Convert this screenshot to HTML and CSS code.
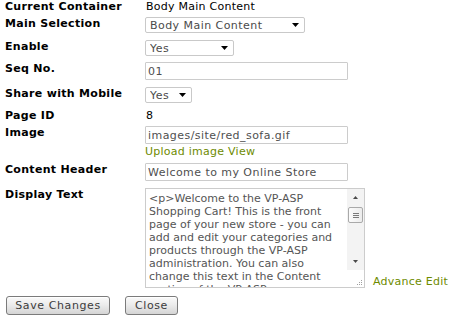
FILE: index.html
```html
<!DOCTYPE html>
<html>
<head>
<meta charset="utf-8">
<link rel="stylesheet" href="styles.css">
</head>
<body>
<div class="form">
  <div class="row text r1">
    <div class="label">Current Container</div>
    <div class="value">Body Main Content</div>
  </div>
  <div class="row">
    <div class="label">Main Selection</div>
    <div class="field">
      <span class="sel w-main"><select><option>Body Main Content</option></select><svg class="arrow" width="7" height="4" viewBox="0 0 7 4"><path d="M0 0H7L3.5 4Z"/></svg></span>
    </div>
  </div>
  <div class="row r3">
    <div class="label">Enable</div>
    <div class="field">
      <span class="sel w-enable"><select><option>Yes</option><option>No</option></select><svg class="arrow" width="7" height="4" viewBox="0 0 7 4"><path d="M0 0H7L3.5 4Z"/></svg></span>
    </div>
  </div>
  <div class="row">
    <div class="label">Seq No.</div>
    <div class="field"><input class="txt" type="text" value="01"></div>
  </div>
  <div class="row r5">
    <div class="label">Share with Mobile</div>
    <div class="field">
      <span class="sel w-share"><select><option>Yes</option><option>No</option></select><svg class="arrow" width="7" height="4" viewBox="0 0 7 4"><path d="M0 0H7L3.5 4Z"/></svg></span>
    </div>
  </div>
  <div class="row text r6">
    <div class="label">Page ID</div>
    <div class="value">8</div>
  </div>
  <div class="row r7">
    <div class="label">Image</div>
    <div class="field stack">
      <input class="txt" type="text" value="images/site/red_sofa.gif">
      <div class="links"><a href="#">Upload image</a> <a href="#">View</a></div>
    </div>
  </div>
  <div class="row">
    <div class="label">Content Header</div>
    <div class="field"><input class="txt" type="text" value="Welcome to my Online Store"></div>
  </div>
  <div class="row r9">
    <div class="label">Display Text</div>
    <div class="field bottom">
      <div class="ta-box">
        <textarea class="ta">&lt;p&gt;Welcome to the VP-ASP Shopping Cart! This is the front page of your new store - you can add and edit your categories and products through the VP-ASP administration. You can also change this text in the Content section of the VP-ASP administration.&lt;/p&gt;</textarea>
        <div class="sb">
          <div class="sb-track">
            <div class="sb-btn"><svg width="5" height="3" viewBox="0 0 5 3"><path d="M0 3H5L2.5 0Z"/></svg></div>
            <div class="sb-thumb"><span></span><span></span><span></span></div>
            <div class="sb-space"></div>
            <div class="sb-btn"><svg width="5" height="3" viewBox="0 0 5 3"><path d="M0 0H5L2.5 3Z"/></svg></div>
          </div>
          <div class="sb-corner">
            <svg width="5" height="5" viewBox="0 0 5 5"><rect x="4" y="0" width="1" height="1"/><rect x="2" y="2" width="1" height="1"/><rect x="4" y="2" width="1" height="1"/><rect x="0" y="4" width="1" height="1"/><rect x="2" y="4" width="1" height="1"/><rect x="4" y="4" width="1" height="1"/></svg>
          </div>
        </div>
      </div>
      <a class="adv" href="#">Advance Edit</a>
    </div>
  </div>
  <div class="actions">
    <button class="btn w-save" type="button">Save Changes</button>
    <button class="btn w-close" type="button">Close</button>
  </div>
</div>
</body>
</html>
```
FILE: styles.css
```css
html, body {
  margin: 0;
  padding: 0;
  background: #ffffff;
}
body {
  font-family: "DejaVu Sans", Verdana, sans-serif;
  font-size: 11px;
  letter-spacing: 0.25px;
  color: #000;
}
.form {
  padding: 0 5px;
  display: flex;
  flex-direction: column;
  align-items: flex-start;
}
.row {
  display: flex;
  align-items: flex-start;
  margin-bottom: 7px;
}
.row.text {
  line-height: 14px;
  margin-bottom: 3px;
}
.r3 { margin-bottom: 6px; }
.r5 { margin-bottom: 6px; }
.r7 { margin-bottom: 4px; }
.r9 { margin-bottom: 8px; }
.label {
  width: 140px;
  font-weight: bold;
  line-height: 14px;
  letter-spacing: 0.3px;
  flex: none;
}
.value {
  padding-left: 1px;
}
.field {
  display: flex;
  align-items: flex-start;
  white-space: nowrap;
}
.field.stack {
  flex-direction: column;
}
.field.bottom {
  align-items: flex-end;
}
.sel {
  display: inline-flex;
  align-items: center;
  box-sizing: border-box;
  height: 16px;
  border: 1px solid #c9c9c9;
  border-radius: 2px;
  background: #fff;
}
.sel select {
  -webkit-appearance: none;
  appearance: none;
  border: none;
  outline: none;
  background: transparent;
  flex: 1;
  min-width: 0;
  height: 14px;
  padding: 0 0 0 4px;
  margin: 0;
  font-family: "DejaVu Sans", Verdana, sans-serif;
  font-size: 11px;
  letter-spacing: 0.45px;
  color: #4a4a4a;
}
.sel .arrow {
  flex: none;
  margin-right: 5px;
  fill: #000;
}
.w-main { width: 160px; }
.w-enable { width: 89px; }
.w-share { width: 47px; }
.txt {
  box-sizing: border-box;
  width: 203px;
  height: 18px;
  margin: 0;
  padding: 0 2px;
  border: 1px solid #cccccc;
  border-radius: 1px;
  font-family: "DejaVu Sans", Verdana, sans-serif;
  font-size: 11px;
  letter-spacing: 0.45px;
  color: #4f4f4f;
  outline: none;
}
.links {
  margin-top: 1px;
  line-height: 14px;
}
a {
  color: #6e8b00;
  text-decoration: none;
}
.ta-box {
  display: flex;
  box-sizing: border-box;
  width: 220px;
  height: 100px;
  border: 1px solid #cccccc;
  background: #fff;
}
.ta {
  flex: 1;
  min-width: 0;
  border: none;
  outline: none;
  resize: none;
  overflow: hidden;
  margin: 0;
  padding: 3px 2px 0 3px;
  font-family: "DejaVu Sans", Verdana, sans-serif;
  font-size: 11px;
  letter-spacing: 0;
  line-height: 13px;
  color: #555;
}
.sb {
  width: 17px;
  flex: none;
  display: flex;
  flex-direction: column;
}
.sb-track {
  flex: 1;
  display: flex;
  flex-direction: column;
  background: #f3f3f3;
}
.sb-btn {
  height: 17px;
  display: flex;
  align-items: center;
  justify-content: center;
  flex: none;
}
.sb-btn svg { fill: #4a4a4a; }
.sb-thumb {
  box-sizing: border-box;
  height: 16px;
  margin: 1px 1px 0 1px;
  border: 1px solid #a9a9a9;
  border-radius: 2px;
  background: linear-gradient(to right, #fbfbfb, #ececec);
  display: flex;
  flex-direction: column;
  align-items: center;
  justify-content: center;
  gap: 1px;
  flex: none;
}
.sb-thumb span {
  width: 6px;
  height: 1px;
  background: #7a7a7a;
}
.sb-space { flex: 1; }
.sb-corner {
  height: 17px;
  flex: none;
  display: flex;
  align-items: flex-end;
  justify-content: flex-end;
  padding: 0 2px 2px 0;
  box-sizing: border-box;
  background: #fff;
}
.sb-corner svg { fill: #a0a0a0; }
.adv {
  margin-left: 8px;
  line-height: 12px;
}
.actions {
  display: flex;
  gap: 15px;
  padding-left: 1px;
}
.btn {
  box-sizing: border-box;
  height: 19px;
  margin: 0;
  padding: 0;
  border: 1px solid #7b7b7b;
  border-radius: 3px;
  background: linear-gradient(to bottom, #fafafa 0%, #ececec 45%, #d5d5d5 100%);
  box-shadow: inset 0 1px 0 #ffffff;
  font-family: "DejaVu Sans", Verdana, sans-serif;
  font-size: 11px;
  letter-spacing: 0.6px;
  color: #3c3c3c;
}
.w-save { width: 104px; }
.w-close { width: 53px; }
```
